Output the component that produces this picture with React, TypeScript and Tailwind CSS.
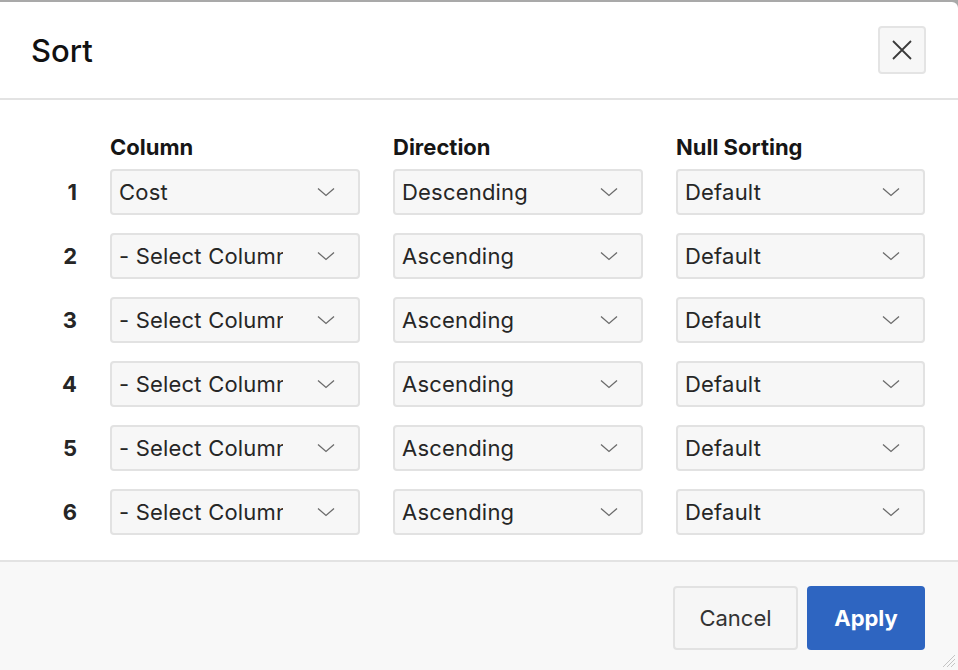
import React from 'react';

const rows = [
  { n: 1, col: 'Cost', dir: 'Descending', nulls: 'Default' },
  { n: 2, col: '- Select Column -', dir: 'Ascending', nulls: 'Default' },
  { n: 3, col: '- Select Column -', dir: 'Ascending', nulls: 'Default' },
  { n: 4, col: '- Select Column -', dir: 'Ascending', nulls: 'Default' },
  { n: 5, col: '- Select Column -', dir: 'Ascending', nulls: 'Default' },
  { n: 6, col: '- Select Column -', dir: 'Ascending', nulls: 'Default' },
];

function Chevron() {
  return (
    <svg width="18" height="10" viewBox="0 0 18 10" fill="none" className="shrink-0">
      <path d="M1 1.5 L9 8.5 L17 1.5" stroke="#6b6b6b" strokeWidth="1.3" />
    </svg>
  );
}

function Select({ value, width }: { value: string; width: string }) {
  return (
    <div
      className={`${width} h-[46px] flex items-center justify-between bg-[#f7f7f7] border-2 border-[#e2e2e2] rounded-[4px] pl-[7px] pr-[23px]`}
    >
      <div className="w-[164px] overflow-hidden whitespace-nowrap text-[22px] text-[#262626] leading-[30px] tracking-[0.2px]">
        {value}
      </div>
      <Chevron />
    </div>
  );
}

export default function App() {
  return (
    <div
      className="w-[958px] h-[670px] bg-[#a9a9a9] pt-[2px] overflow-hidden"
      style={{ fontFamily: 'Inter, "Liberation Sans", sans-serif' }}
    >
      <div className="relative h-full bg-white rounded-tr-[6px] flex flex-col">
        {/* header */}
        <div className="h-[98px] shrink-0 flex items-center justify-between pl-[31px] pr-[32px] border-b-2 border-[#e3e3e3]">
          <h1 className="text-[31px] font-medium text-[#111] pt-[2px]">Sort</h1>
          <button className="w-[48px] h-[48px] flex items-center justify-center bg-[#f7f7f7] border-2 border-[#e4e4e4] rounded-[4px]">
            <svg width="22" height="22" viewBox="0 0 22 22" fill="none">
              <path d="M2 2 L20 20 M20 2 L2 20" stroke="#3a3a3a" strokeWidth="1.8" />
            </svg>
          </button>
        </div>

        {/* body */}
        <div className="px-[33px] pt-[33px] pb-[25px] flex flex-col gap-[18px]">
          <div className="flex gap-[33px] -mb-[10px] text-[22px] font-bold text-[#161616] leading-[28px]">
            <div className="w-[44px]" />
            <div className="w-[250px]">Column</div>
            <div className="w-[250px]">Direction</div>
            <div className="w-[249px]">Null Sorting</div>
          </div>
          {rows.map((r) => (
            <div key={r.n} className="flex items-center gap-[33px]">
              <div className="w-[44px] text-right text-[22px] font-bold text-[#262626]">{r.n}</div>
              <Select value={r.col} width="w-[250px]" />
              <Select value={r.dir} width="w-[250px]" />
              <Select value={r.nulls} width="w-[249px]" />
            </div>
          ))}
        </div>

        {/* footer */}
        <div className="flex-1 bg-[#f8f8f8] border-t-2 border-[#e3e3e3] flex justify-end items-start gap-[9px] pt-[24px] pr-[33px]">
          <button className="w-[125px] h-[64px] bg-[#f6f6f6] border-2 border-[#e2e2e2] rounded-[4px] text-[22px] text-[#333]">
            Cancel
          </button>
          <button className="w-[118px] h-[64px] bg-[#2e65c1] rounded-[4px] text-[22px] font-bold text-white">
            Apply
          </button>
        </div>

        <svg className="absolute right-[2px] bottom-[2px]" width="18" height="18" viewBox="0 0 18 18">
          <path d="M17 5 L5 17 M17 9 L9 17 M17 13 L13 17" stroke="#c4c4c4" strokeWidth="1" />
        </svg>
      </div>
    </div>
  );
}
